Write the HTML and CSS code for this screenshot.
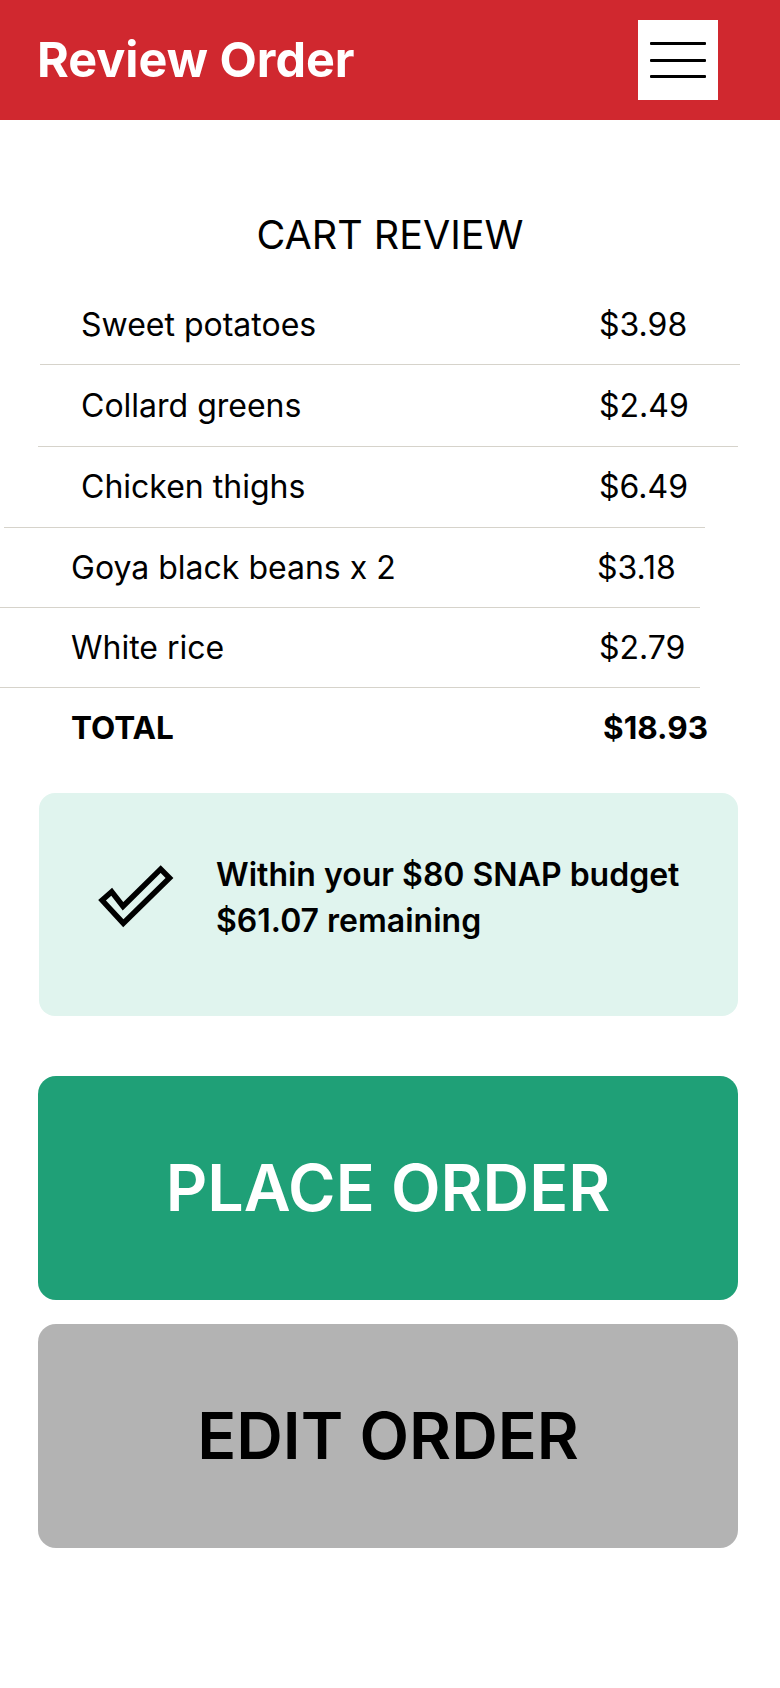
FILE: index.html
```html
<!DOCTYPE html>
<html lang="en">
<head>
<meta charset="utf-8">
<title>Review Order</title>
<link rel="stylesheet" href="styles.css">
</head>
<body>
<header class="topbar">
  <h1 class="topbar-title">Review Order</h1>
  <button class="menu-btn" aria-label="Menu"><span></span><span></span><span></span></button>
</header>
<main class="page">
  <h2 class="cart-title">CART REVIEW</h2>
  <ul class="cart">
    <li class="row row-1"><span class="name">Sweet potatoes</span><span class="price">$3.98</span></li>
    <li class="row row-2"><span class="name">Collard greens</span><span class="price">$2.49</span></li>
    <li class="row row-3"><span class="name">Chicken thighs</span><span class="price">$6.49</span></li>
    <li class="row row-4"><span class="name">Goya black beans x 2</span><span class="price">$3.18</span></li>
    <li class="row row-5"><span class="name">White rice</span><span class="price">$2.79</span></li>
    <li class="row row-total"><span class="name">TOTAL</span><span class="price">$18.93</span></li>
  </ul>
  <div class="budget">
    <svg class="budget-icon" width="80" height="68" viewBox="0 0 80 68" aria-hidden="true">
      <polygon points="15.7,29.8 6.1,38.3 27.3,61.2 73.5,16 64.7,7.1 27,44.3" fill="none" stroke="#000" stroke-width="5.5" stroke-linejoin="miter"/>
    </svg>
    <div class="budget-text">
      <div>Within your $80 SNAP budget</div>
      <div>$61.07 remaining</div>
    </div>
  </div>
  <button class="btn btn-place">PLACE ORDER</button>
  <button class="btn btn-edit">EDIT ORDER</button>
</main>
</body>
</html>
```

FILE: styles.css
```css
* { box-sizing: border-box; }
html, body { margin: 0; padding: 0; background: #fff; }
body { font-family: "Inter", "Noto Sans", sans-serif; color: #000; width: 780px; }

.topbar {
  height: 120px;
  background: #d0282f;
  display: flex;
  align-items: center;
  justify-content: space-between;
  padding: 0 62px 0 37px;
}
.topbar-title {
  margin: 0;
  font-family: "Inter", sans-serif;
  font-weight: 700;
  font-size: 48.5px;
  color: #fff;
  line-height: 56px;
}
.menu-btn {
  width: 80px;
  height: 80px;
  background: #fff;
  border: 0;
  padding: 0 12px;
  display: flex;
  flex-direction: column;
  justify-content: center;
  gap: 13.5px;
  cursor: pointer;
}
.menu-btn span { display: block; height: 3px; width: 56px; background: #000; border-radius: 1px; }

.page { display: flex; flex-direction: column; padding-bottom: 80px; }

.cart-title {
  margin: 92px 0 26px;
  text-align: center;
  font-weight: 400;
  font-size: 39.5px;
  line-height: 47px;
}

.cart { list-style: none; margin: 0; padding: 0; }
.row {
  display: grid;
  font-size: 32px;
  line-height: 39px;
  padding-top: 20px;
  padding-bottom: 20px;
  border-bottom: 1px solid #d6d3cb;
  width: 700px;
}
.row-1 { margin-left: 40px; padding-left: 41px; grid-template-columns: 518px auto; }
.row-2 { margin-left: 38px; padding-left: 43px; grid-template-columns: 518px auto; padding-top: 21px; padding-bottom: 21px; }
.row-3 { margin-left: 4px; width: 701px; padding-left: 77px; grid-template-columns: 518px auto; padding-bottom: 21px; }
.row-4 { margin-left: 0; padding-left: 71px; grid-template-columns: 526px auto; }
.row-5 { margin-left: 0; padding-left: 71px; grid-template-columns: 528px auto; }
.row-total { margin-left: 0; padding-left: 71px; grid-template-columns: 532px auto; border-bottom: 0; font-weight: 700; font-size: 31.5px; }

.budget {
  margin: 26px 0 0 39px;
  width: 699px;
  height: 223px;
  background: #e0f4ee;
  border-radius: 16px;
  display: flex;
  align-items: center;
  padding: 0 20px 13px 57px;
  gap: 40px;
}
.budget-icon { flex: none; margin-bottom: 4px; }
.budget-text { font-weight: 600; font-size: 32px; line-height: 45.7px; }

.btn {
  display: flex;
  align-items: center;
  justify-content: center;
  margin-left: 38px;
  width: 700px;
  height: 224px;
  border: 0;
  border-radius: 18px;
  font-family: "Inter", sans-serif;
  font-size: 64.5px;
  font-weight: 600;
  cursor: pointer;
}
.btn-place { margin-top: 60px; background: #1fa077; color: #fff; }
.btn-edit { margin-top: 24px; background: #b3b3b3; color: #000; }
```
